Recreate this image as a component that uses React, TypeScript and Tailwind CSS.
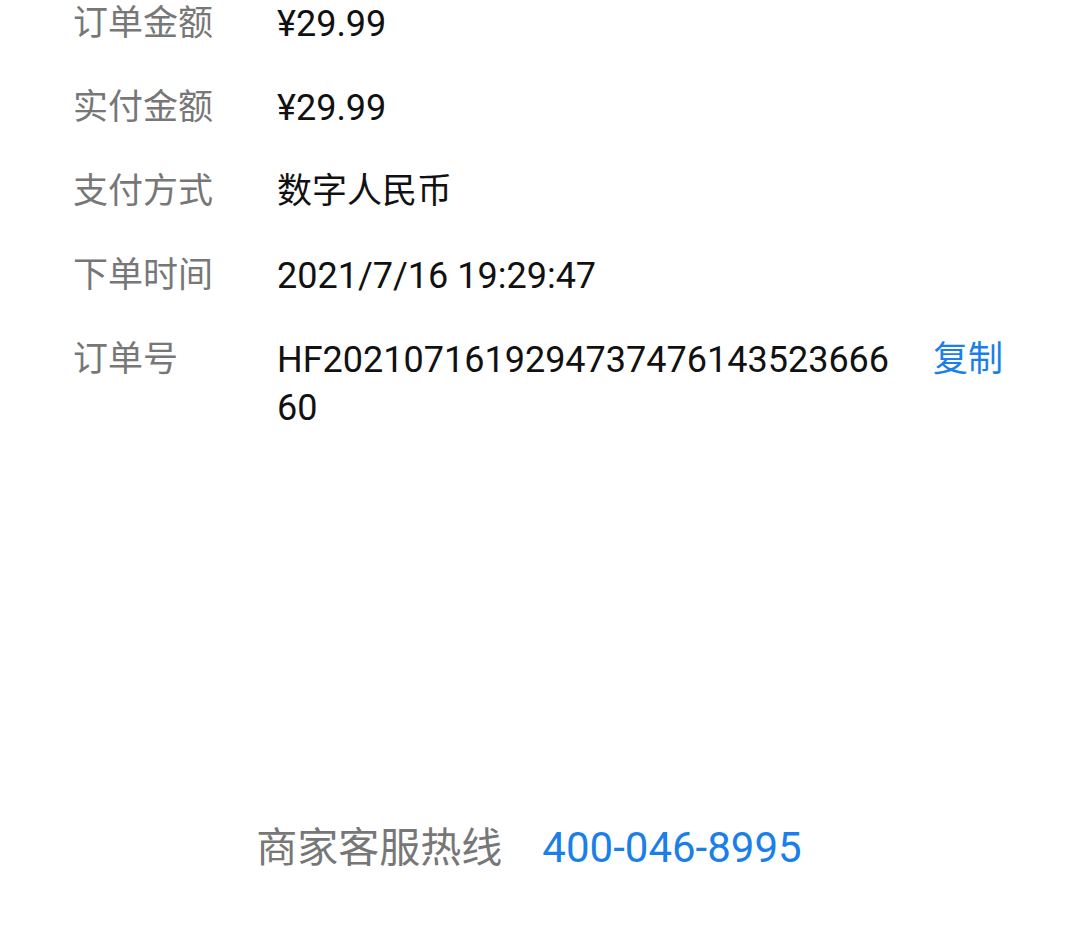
import React from 'react';

const rows = [
  { label: '订单金额', value: '¥29.99', latin: true },
  { label: '实付金额', value: '¥29.99', latin: true },
  { label: '支付方式', value: '数字人民币', latin: false },
  { label: '下单时间', value: '2021/7/16 19:29:47', latin: true },
];

const font = { fontFamily: 'Roboto, "Noto Sans CJK SC", sans-serif' };

export default function App() {
  return (
    <div className="min-h-screen w-[1079px] bg-white" style={font}>
      <div className="flex flex-col gap-[36px] pl-[73px] pr-[78px] text-[35px] leading-[48px]">
        {rows.map((row) => (
          <div key={row.label} className="flex">
            <div className="w-[204px] shrink-0 text-[#777777]">{row.label}</div>
            <div className={row.latin ? 'text-[36px] text-[#111111]' : 'text-[#111111]'}>
              {row.value}
            </div>
          </div>
        ))}
        <div className="flex">
          <div className="w-[204px] shrink-0 text-[#777777]">订单号</div>
          <div className="w-[620px] shrink-0 break-all text-[36px] text-[#111111]">
            HF202107161929473747614352366660
          </div>
          <button className="ml-[36px] shrink-0 self-start text-[#1a7fe8]">复制</button>
        </div>
      </div>

      <div className="mt-[392px] flex items-center justify-center pr-[21px] leading-[48px]">
        <span className="text-[41px] text-[#777777]">商家客服热线</span>
        <span className="ml-[40px] text-[42px] text-[#1a7fe8]">400-046-8995</span>
      </div>
    </div>
  );
}
